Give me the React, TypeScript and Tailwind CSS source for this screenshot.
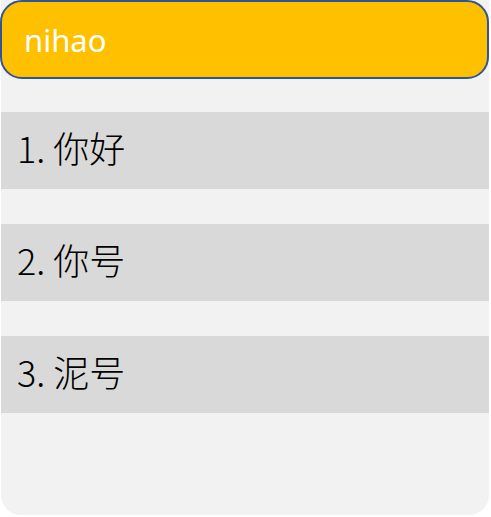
const items = ["1. 你好", "2. 你号", "3. 泥号"];

export default function App() {
  return (
    <div
      className="h-[517px] w-[491px] bg-white"
      style={{ fontFamily: '"Noto Sans", "Noto Sans CJK SC", sans-serif' }}
    >
      <div className="ml-px flex h-[515px] w-[488px] flex-col rounded-b-[20px] bg-[#f2f2f2]">
        {/* Header */}
        <div className="-ml-px flex h-[79px] w-[489px] items-center rounded-[22px] border-2 border-[#2f5597] bg-[#ffc000] pl-[22px]">
          <span className="pt-[2px] text-[31px] leading-none text-white">nihao</span>
        </div>

        {/* List */}
        <div className="mt-[33px] flex flex-col gap-[35px]">
          {items.map((item) => (
            <div key={item} className="flex h-[77px] items-center bg-[#d9d9d9] pl-[16px]">
              <span
                className="pb-[8px] text-[36px] font-light leading-none text-black"
                style={{ fontFamily: '"Noto Sans CJK SC", sans-serif' }}
              >
                {item}
              </span>
            </div>
          ))}
        </div>
      </div>
    </div>
  );
}
